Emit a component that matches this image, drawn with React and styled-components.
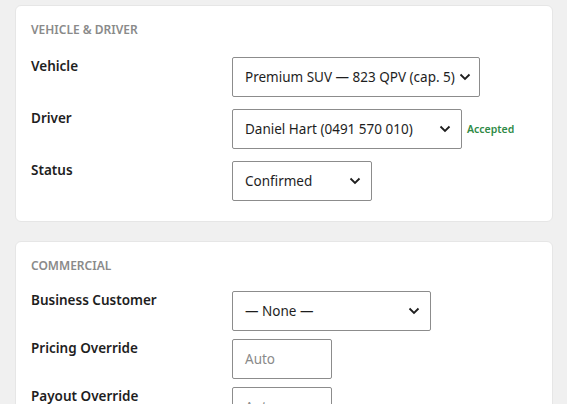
import React from 'react';
import styled, { createGlobalStyle } from 'styled-components';

const GlobalStyle = createGlobalStyle`
  body {
    margin: 0;
    background: #f0f0f0;
    font-family: "Noto Sans", "Open Sans", sans-serif;
    color: #1e1e1e;
  }
`;

const Page = styled.div`
  padding: 5px 14px 0 15px;
  display: flex;
  flex-direction: column;
  gap: 19px;
  height: 404px;
  overflow: hidden;
  box-sizing: border-box;
`;

const Card = styled.section`
  background: #fff;
  border: 1px solid #e6e6e6;
  border-radius: 6px;
  padding: 16px 15px 20px;
  flex-shrink: 0;
`;

const Heading = styled.h2`
  margin: 0 0 ${p => p.$after}px;
  font-size: 12px;
  font-weight: 600;
  color: #8a8a8a;
  text-transform: uppercase;
  line-height: 16px;
`;

const Rows = styled.div`
  display: flex;
  flex-direction: column;
  gap: ${p => p.$gap}px;
`;

const Row = styled.div`
  display: grid;
  grid-template-columns: 201px 1fr;
  align-items: start;
`;

const Label = styled.div`
  font-size: 13.5px;
  font-weight: 600;
  line-height: 18px;
  padding-top: 0;
`;

const Control = styled.div`
  display: flex;
  align-items: center;
  gap: 5px;
`;

const Select = styled.div`
  width: ${p => p.$w}px;
  height: 40px;
  box-sizing: border-box;
  border: 1px solid #8c8c8c;
  border-radius: 2px;
  display: flex;
  align-items: center;
  justify-content: space-between;
  padding: 0 ${p => p.$pr}px 0 12px;
  font-size: 13.5px;
  white-space: nowrap;
`;

const Input = styled.div`
  width: 100px;
  height: 40px;
  box-sizing: border-box;
  border: 1px solid #8c8c8c;
  border-radius: 2px;
  display: flex;
  align-items: center;
  padding: 0 12px;
  font-size: 13.5px;
  color: #8a8a8a;
`;

const Badge = styled.span`
  font-size: 10.5px;
  font-weight: 600;
  color: #2f8a46;
`;

const Chevron = () => (
  <svg width="12" height="8" viewBox="0 0 12 8" fill="none">
    <path d="M1.5 1.5 L6 6 L10.5 1.5" stroke="#1e1e1e" strokeWidth="1.8" />
  </svg>
);

const Dropdown = ({ w, pr = 10, children }) => (
  <Select $w={w} $pr={pr}>
    <span>{children}</span>
    <Chevron />
  </Select>
);

export default function App() {
  return (
    <>
      <GlobalStyle />
      <Page>
        <Card>
          <Heading $after={19}>Vehicle &amp; Driver</Heading>
          <Rows $gap={12}>
            <Row>
              <Label>Vehicle</Label>
              <Control>
                <Dropdown w={248} pr={8}>Premium SUV — 823 QPV (cap. 5)</Dropdown>
              </Control>
            </Row>
            <Row>
              <Label>Driver</Label>
              <Control>
                <Dropdown w={230}>Daniel Hart (0491 570 010)</Dropdown>
                <Badge>Accepted</Badge>
              </Control>
            </Row>
            <Row>
              <Label>Status</Label>
              <Control>
                <Dropdown w={140}>Confirmed</Dropdown>
              </Control>
            </Row>
          </Rows>
        </Card>
        <Card>
          <Heading $after={17}>Commercial</Heading>
          <Rows $gap={8}>
            <Row>
              <Label>Business Customer</Label>
              <Control>
                <Dropdown w={199}>— None —</Dropdown>
              </Control>
            </Row>
            <Row>
              <Label>Pricing Override</Label>
              <Control>
                <Input>Auto</Input>
              </Control>
            </Row>
            <Row>
              <Label>Payout Override</Label>
              <Control>
                <Input>Auto</Input>
              </Control>
            </Row>
          </Rows>
        </Card>
      </Page>
    </>
  );
}
